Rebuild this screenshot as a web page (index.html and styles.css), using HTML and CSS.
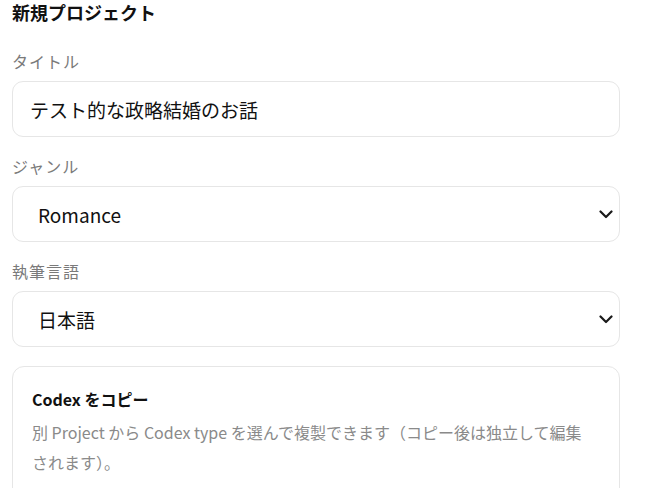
FILE: index.html
```html
<!DOCTYPE html>
<html lang="ja">
<head>
  <meta charset="UTF-8">
  <meta name="viewport" content="width=device-width, initial-scale=1.0">
  <title>新規プロジェクト</title>
  <link rel="stylesheet" href="styles.css">
</head>
<body>

  <div class="panel">
    <h2 class="panel-title">新規プロジェクト</h2>

    <!-- Basic project fields -->
    <div class="field">
      <label class="field-label" for="title">タイトル</label>
      <input id="title" class="field-input" type="text" value="テスト的な政略結婚のお話">
    </div>

    <div class="field">
      <label class="field-label" for="genre">ジャンル</label>
      <div class="select-wrap">
        <select id="genre" class="field-select">
          <option selected>Romance</option>
          <option>Fantasy</option>
          <option>Mystery</option>
        </select>
        <svg class="chevron" width="14" height="9" viewBox="0 0 14 9"><path d="M1.5 1.5 L7 7 L12.5 1.5" fill="none" stroke="#1a1a1a" stroke-width="2.2" stroke-linecap="round" stroke-linejoin="round"/></svg>
      </div>
    </div>

    <div class="field">
      <label class="field-label" for="lang">執筆言語</label>
      <div class="select-wrap">
        <select id="lang" class="field-select">
          <option selected>日本語</option>
          <option>English</option>
        </select>
        <svg class="chevron" width="14" height="9" viewBox="0 0 14 9"><path d="M1.5 1.5 L7 7 L12.5 1.5" fill="none" stroke="#1a1a1a" stroke-width="2.2" stroke-linecap="round" stroke-linejoin="round"/></svg>
      </div>
    </div>

    <!-- Codex copy section -->
    <div class="card">
      <h3 class="card-title">Codex をコピー</h3>
      <p class="card-text">別 Project から Codex type を選んで複製できます（コピー後は独立して編集されます）。</p>
    </div>
  </div>

</body>
</html>
```

FILE: styles.css
```css
body {
  margin: 0;
  background: #ffffff;
  color: #111111;
  font-family: "Noto Sans CJK JP", "Noto Sans", sans-serif;
}

.panel {
  width: 608px;
  padding: 0 12px;
}

.panel-title {
  margin: 0;
  font-size: 18px;
  font-weight: 700;
  line-height: 24px;
}

.field {
  margin-top: 25px;
}
.field + .field {
  margin-top: 17px;
}

.field-label {
  display: block;
  color: #7a7a7a;
  font-size: 16px;
  letter-spacing: 1px;
  line-height: 24px;
  margin-bottom: 8px;
}

.field-input,
.field-select {
  box-sizing: border-box;
  width: 100%;
  height: 56px;
  border: 1px solid #e6e6e6;
  border-radius: 11px;
  background: #ffffff;
  color: #111111;
  font-family: inherit;
  font-size: 19px;
  outline: none;
}

.field-input {
  padding: 0 17px;
}

.field-select {
  appearance: none;
  -webkit-appearance: none;
  padding: 0 25px;
}

.select-wrap {
  position: relative;
}

.chevron {
  position: absolute;
  right: 7px;
  top: 24px;
  pointer-events: none;
}

.card {
  margin-top: 19px;
  border: 1px solid #e6e6e6;
  border-radius: 12px;
  padding: 18px 19px 20px;
  height: 120px;
}

.card-title {
  margin: 0;
  font-size: 16px;
  font-weight: 700;
  line-height: 28px;
}

.card-text {
  margin: 4px 0 0;
  padding-right: 12px;
  color: #8a8a8a;
  font-size: 16px;
  line-height: 30px;
}
```
